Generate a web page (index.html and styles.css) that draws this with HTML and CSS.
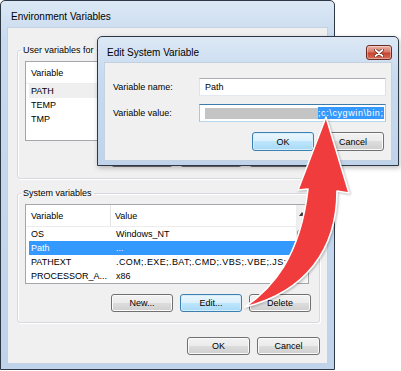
FILE: index.html
```html
<!DOCTYPE html>
<html lang="en">
<head>
    <meta charset="UTF-8">
    <title>Environment Variables</title>
    <link rel="stylesheet" href="styles.css">
</head>
<body>
    <div class="desktop">
        <!-- Hauptfenster -->
        <div class="window env-window">
            <div class="titlebar"><span class="title">Environment Variables</span></div>
            <div class="client env-client">
                <fieldset class="group">
                    <legend>User variables for</legend>
                    <div class="list">
                        <div class="list-main">
                            <div class="list-header"><span class="head-name">Variable</span><span class="head-value"></span></div>
                            <div class="row inactive"><span class="cell-name">PATH</span><span class="cell-value"></span></div>
                            <div class="row"><span class="cell-name">TEMP</span><span class="cell-value"></span></div>
                            <div class="row"><span class="cell-name">TMP</span><span class="cell-value"></span></div>
                        </div>
                    </div>
                    <div class="button-row">
                        <button class="btn"></button>
                        <button class="btn"></button>
                        <button class="btn"></button>
                    </div>
                </fieldset>

                <fieldset class="group system-group">
                    <legend>System variables</legend>
                    <div class="list">
                        <div class="list-main">
                            <div class="list-header"><span class="head-name">Variable</span><span class="head-value">Value</span></div>
                            <div class="row"><span class="cell-name">OS</span><span class="cell-value">Windows_NT</span></div>
                            <div class="row selected"><span class="cell-name">Path</span><span class="cell-value">...</span></div>
                            <div class="row"><span class="cell-name">PATHEXT</span><span class="cell-value wide">.COM;.EXE;.BAT;.CMD;.VBS;.VBE;.JS;...</span></div>
                            <div class="row"><span class="cell-name">PROCESSOR_A...</span><span class="cell-value">x86</span></div>
                        </div>
                        <div class="scrollbar">
                            <div class="sb-btn"><span class="tri-up"></span></div>
                            <div class="sb-track"><div class="sb-thumb"></div></div>
                            <div class="sb-btn"><span class="tri-down"></span></div>
                        </div>
                    </div>
                    <div class="button-row">
                        <button class="btn">New...</button>
                        <button class="btn default">Edit...</button>
                        <button class="btn">Delete</button>
                    </div>
                </fieldset>

                <div class="button-row window-buttons">
                    <button class="btn wide-btn">OK</button>
                    <button class="btn wide-btn">Cancel</button>
                </div>
            </div>
        </div>

        <!-- Dialog -->
        <div class="window edit-dialog">
            <div class="titlebar dialog-titlebar">
                <span class="title">Edit System Variable</span>
                <span class="close-btn">
                    <svg width="10" height="8" viewBox="0 0 10 8">
                        <path d="M1.5 1 L8.5 7 M8.5 1 L1.5 7" stroke="#5a1d16" stroke-width="3.2" stroke-linecap="round"/>
                        <path d="M1.5 1 L8.5 7 M8.5 1 L1.5 7" stroke="#fff" stroke-width="1.8" stroke-linecap="round"/>
                    </svg>
                </span>
            </div>
            <div class="client dialog-client">
                <div class="field-row">
                    <span class="field-label">Variable name:</span>
                    <div class="textbox">Path</div>
                </div>
                <div class="field-row">
                    <span class="field-label">Variable value:</span>
                    <div class="textbox focused"><span class="redacted"></span><span class="selection">;c:\cygwin\bin;</span></div>
                </div>
                <div class="button-row dialog-buttons">
                    <button class="btn default dlg-btn">OK</button>
                    <button class="btn dlg-btn">Cancel</button>
                </div>
            </div>
        </div>

        <!-- Pfeil -->
        <svg class="arrow" width="401" height="371" viewBox="0 0 401 371">
            <path d="M326 117 L349 193 L337 191 C337 250 305 292 245 307 C272 288 300 258 308 189 L298 190 Z" fill="#f03c3c" stroke="#fff" stroke-width="1.6" stroke-linejoin="round"/>
        </svg>
    </div>
</body>
</html>
```

FILE: styles.css
```css
/* Grundlegende Stile */
html, body {
    margin: 0;
    padding: 0;
    font-family: "Liberation Sans", Arial, sans-serif;
    font-size: 9px;
    color: #000;
    background-color: #fff;
}
.desktop {
    position: relative;
    width: 401px;
    height: 371px;
    overflow: hidden;
    background-color: #fff;
}

/* Fensterrahmen */
.window {
    box-sizing: border-box;
    display: flex;
    flex-direction: column;
    border: 1px solid #2e3844;
    background: linear-gradient(#dce8f5, #c7daef 40px, #bfd4eb);
}
.titlebar {
    box-sizing: border-box;
    display: flex;
    align-items: center;
    font-size: 10px;
}
.client {
    background-color: #f0f0f0;
    box-shadow: inset 0 0 0 1px #c3d1e0;
}

/* Hauptfenster */
.env-window {
    width: 335px;
    height: 370px;
    padding: 0 6px 5px;
    border-radius: 5px 5px 0 0;
}
.env-window .titlebar {
    height: 26px;
    padding: 4px 0 0 4px;
}
.env-client {
    flex: 1;
    display: flex;
    flex-direction: column;
    padding: 17px 8px 0 10px;
}

/* Gruppenrahmen */
.group {
    margin: 0;
    padding: 5px 10px 11px 7px;
    border: 1px solid #d5d9dd;
    border-radius: 3px;
    box-shadow: inset 1px 1px 0 #fff, 1px 1px 0 #fff;
}
.group legend {
    margin-left: -4px;
    padding: 0 2px;
    line-height: 12px;
}
.system-group {
    margin-top: 8px;
    padding-bottom: 10px;
}
.system-group .button-row {
    margin-top: 10px;
}

/* Listen */
.list {
    box-sizing: border-box;
    height: 80px;
    display: flex;
    border: 1px solid #a3a6ab;
    background-color: #fff;
}
.list-main {
    flex: 1;
    display: flex;
    flex-direction: column;
    overflow: hidden;
}
.list-header {
    box-sizing: border-box;
    height: 22px;
    flex-shrink: 0;
    display: flex;
    align-items: center;
    border-bottom: 1px solid #ececec;
}
.head-name {
    box-sizing: border-box;
    width: 85px;
    height: 100%;
    padding-left: 5px;
    display: flex;
    align-items: center;
    border-right: 1px solid #e3e3e3;
}
.head-value {
    padding-left: 4px;
}
.row {
    height: 14px;
    flex-shrink: 0;
    display: flex;
    align-items: center;
    margin-left: 3px;
    white-space: nowrap;
}
.cell-name {
    width: 82px;
    padding-left: 2px;
    box-sizing: border-box;
    flex-shrink: 0;
}
.cell-value {
    padding-left: 5px;
}
.cell-value.wide {
    letter-spacing: 0.4px;
}
.row.selected {
    background-color: #3399ff;
    color: #fff;
}
.row.inactive {
    background-color: #efefef;
}

/* Bildlaufleiste */
.scrollbar {
    width: 12px;
    display: flex;
    flex-direction: column;
    align-items: center;
    background: linear-gradient(90deg, #ececec, #f8f8f8);
}
.sb-btn {
    height: 17px;
    display: flex;
    align-items: center;
    justify-content: center;
}
.sb-track {
    flex: 1;
}
.sb-thumb {
    box-sizing: border-box;
    width: 10px;
    height: 13px;
    margin-top: 8px;
    border: 1px solid #979797;
    border-radius: 2px;
    background: linear-gradient(90deg, #f4f4f4, #e2e2e2);
}
.tri-up, .tri-down {
    width: 0;
    height: 0;
    border-left: 3px solid transparent;
    border-right: 3px solid transparent;
}
.tri-up {
    border-bottom: 4px solid #3a3a3a;
}
.tri-down {
    border-top: 4px solid #3a3a3a;
}

/* Schaltflächen */
.button-row {
    display: flex;
    justify-content: flex-end;
    gap: 7px;
    margin-top: 8px;
    margin-right: -2px;
}
.window-buttons {
    margin-top: 14px;
    margin-right: 0;
}
.btn {
    box-sizing: border-box;
    width: 62px;
    height: 18px;
    padding: 0;
    display: flex;
    align-items: center;
    justify-content: center;
    font-family: inherit;
    font-size: 9px;
    color: #000;
    border: 1px solid #707070;
    border-radius: 3px;
    background: linear-gradient(#f2f2f2, #ebebeb 50%, #dddddd 50%, #cfcfcf);
    box-shadow: inset 0 0 0 1px #fbfbfb;
}
.btn.default {
    border-color: #3c7fb1;
    background: linear-gradient(#eaf6fd, #d9f0fc 50%, #bee6fd 50%, #a7d9f5);
    box-shadow: inset 0 0 0 1px #d6eefb;
}
.wide-btn {
    width: 63px;
}

/* Dialog */
.edit-dialog {
    position: absolute;
    left: 97px;
    top: 36px;
    width: 302px;
    height: 130px;
    padding: 0 6px 4px;
    border-radius: 5px 5px 0 0;
    box-shadow: 1px 2px 5px rgba(0, 0, 0, 0.25);
}
.dialog-titlebar {
    height: 25px;
    padding: 6px 0 0 3px;
    justify-content: space-between;
}
.close-btn {
    box-sizing: border-box;
    width: 26px;
    height: 15px;
    display: flex;
    align-items: center;
    justify-content: center;
    border: 1px solid #6b2b23;
    border-radius: 3px;
    background: linear-gradient(#eab4a8, #d9796a 45%, #c7432f 55%, #d66f5b);
    box-shadow: inset 0 0 0 1px rgba(255, 255, 255, 0.35);
}
.dialog-client {
    flex: 1;
    display: flex;
    flex-direction: column;
    padding: 16px 6px 0 9px;
}
.field-row {
    display: flex;
    align-items: center;
    height: 18px;
}
.field-row + .field-row {
    margin-top: 8px;
}
.field-label {
    width: 86px;
    flex-shrink: 0;
}
.textbox {
    box-sizing: border-box;
    flex: 1;
    height: 18px;
    display: flex;
    align-items: center;
    padding-left: 5px;
    background-color: #fff;
    border: 1px solid;
    border-color: #abadb3 #dbdfe6 #e3e9ef #e2e3ea;
    white-space: nowrap;
    overflow: hidden;
}
.textbox.focused {
    border-color: #3d7bad #a4c9e3 #b7d9ed #a4c9e3;
}
.redacted {
    width: 113px;
    height: 11px;
    background-color: #c4c4c4;
}
.selection {
    height: 12px;
    line-height: 12px;
    background-color: #3399ff;
    color: #fff;
    letter-spacing: 0.6px;
}
.dialog-buttons {
    margin-top: 10px;
    margin-right: 0;
    padding-right: 2px;
    gap: 8px;
}
.dlg-btn {
    height: 19px;
}

/* Pfeil */
.arrow {
    position: absolute;
    left: 0;
    top: 0;
    pointer-events: none;
    filter: drop-shadow(1px 1px 1px rgba(0, 0, 0, 0.25));
}
```
